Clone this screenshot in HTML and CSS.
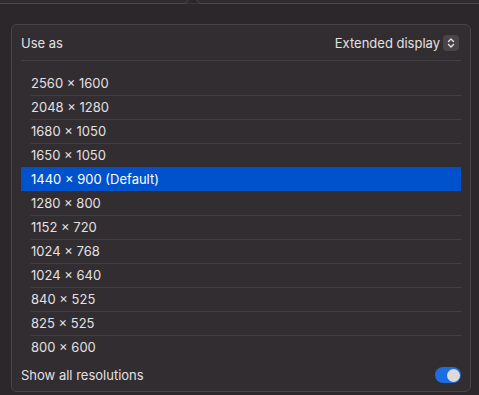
FILE: index.html
```html
<!DOCTYPE html>
<html lang="en">
<head>
  <meta charset="UTF-8" />
  <meta name="viewport" content="width=device-width, initial-scale=1.0" />
  <title>Display resolution</title>
  <link rel="stylesheet" href="styles.css">
</head>
<body>
  <div class="popover-edge">
    <svg class="arrow" width="22" height="5" viewBox="0 0 22 5">
      <path d="M0 4.5 L3 4.5 L7 0.5 L14 0.5 L18 4.5 L22 4.5" fill="#2c272b" stroke="#4d474b" stroke-width="1" />
    </svg>
  </div>

  <div class="card">
    <div class="use-as">
      <span>Use as</span>
      <div class="popup">
        <span>Extended display</span>
        <span class="stepper">
          <svg width="16" height="16" viewBox="0 0 16 16">
            <path d="M5.5 6.5 L8 4 L10.5 6.5 M5.5 9.5 L8 12 L10.5 9.5" fill="none" stroke="#e6e3e5" stroke-width="1.4" stroke-linecap="round" stroke-linejoin="round" />
          </svg>
        </span>
      </div>
    </div>

    <div class="res-list">
      <div class="res">2560 × 1600</div>
      <div class="res">2048 × 1280</div>
      <div class="res">1680 × 1050</div>
      <div class="res">1650 × 1050</div>
      <div class="res selected">1440 × 900 (Default)</div>
      <div class="res">1280 × 800</div>
      <div class="res">1152 × 720</div>
      <div class="res">1024 × 768</div>
      <div class="res">1024 × 640</div>
      <div class="res">840 × 525</div>
      <div class="res">825 × 525</div>
      <div class="res">800 × 600</div>
    </div>

    <div class="show-all">
      <span>Show all resolutions</span>
      <span class="toggle"><span class="knob"></span></span>
    </div>
  </div>
</body>
</html>
```

FILE: styles.css
```css
body {
  margin: 0;
  background-color: #2c272b;
  color: #e3e0e2;
  font-family: Inter, "Liberation Sans", sans-serif;
  font-size: 13px;
}

.popover-edge {
  position: relative;
  height: 3px;
  background-color: #312c30;
  border-bottom: 1px solid #4d474b;
}

.popover-edge .arrow {
  position: absolute;
  left: 182px;
  top: -1px;
}

.card {
  margin: 20px 8px 0 11px;
  padding: 0 9px;
  height: 366px;
  background-color: #322d31;
  border: 1px solid #4a4448;
  border-radius: 6px;
}

.use-as {
  display: flex;
  justify-content: space-between;
  align-items: center;
  height: 36px;
  padding-top: 1px;
  padding-right: 2px;
  box-sizing: border-box;
  border-bottom: 1px solid #443e42;
}

.popup {
  display: flex;
  align-items: center;
  gap: 3px;
}

.stepper {
  display: flex;
  width: 16px;
  height: 16px;
  border-radius: 4px;
  background-color: #4a4448;
}

.res-list {
  margin-top: 10px;
}

.res {
  height: 24px;
  line-height: 24px;
  padding-left: 10px;
  background: linear-gradient(#443e42, #443e42) no-repeat 10px 0 / calc(100% - 10px) 1px;
}

.res:first-child,
.selected + .res {
  background: none;
}

.res.selected {
  background: #0052cc;
  color: #ffffff;
}

.show-all {
  display: flex;
  justify-content: space-between;
  align-items: center;
  height: 32px;
}

.toggle {
  display: flex;
  justify-content: flex-end;
  align-items: center;
  width: 26px;
  height: 16px;
  padding: 0 1px;
  box-sizing: border-box;
  border-radius: 8px;
  background-color: #1d6de0;
}

.knob {
  width: 13px;
  height: 13px;
  border-radius: 50%;
  background-color: #dcdadb;
}
```
